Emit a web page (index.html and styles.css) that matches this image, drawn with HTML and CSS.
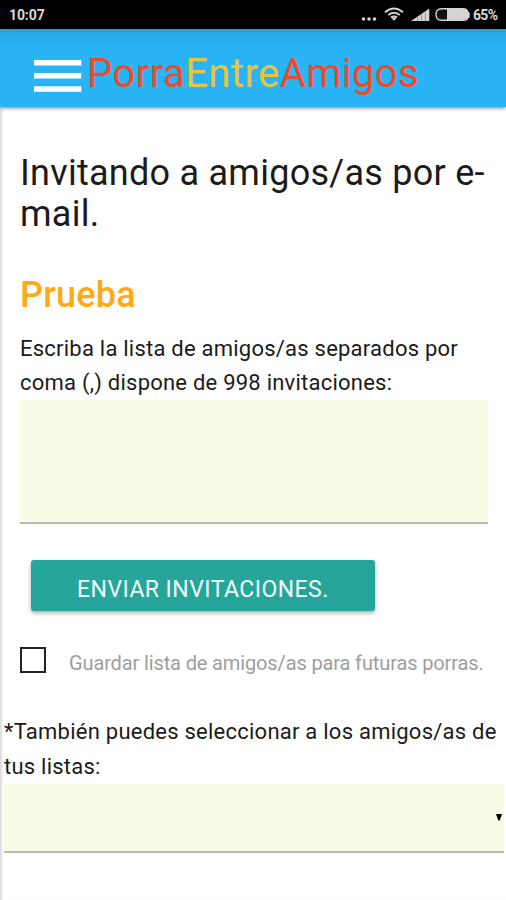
FILE: index.html
```html
<!DOCTYPE html>
<html lang="es">
<head>
<meta charset="utf-8">
<title>PorraEntreAmigos</title>
<link rel="stylesheet" href="styles.css">
</head>
<body>
<div class="status">
  <span class="clock">10:07</span>
  <svg class="status-icons" width="111" height="28" viewBox="0 0 111 28">
    <g fill="#d4d4d4">
      <circle cx="2.5" cy="19" r="1.8"/><circle cx="8" cy="19" r="1.8"/><circle cx="13.5" cy="19" r="1.8"/>
      <path d="M68.300 21H50L68.300 8.500Z"/>
    </g>
    <g fill="none" stroke="#d4d4d4" stroke-width="1.900">
      <path d="M24 12.2Q33 4.800 42 12.2M27.300 15Q33 10.3 38.700 15M30 17.6Q33 15.2 36 17.6"/>
    </g>
    <path d="M30.700 18.2Q33 16.6 35.300 18.2L33 20.8Z" fill="#d4d4d4"/>
    <path d="M56.500 16.500V21M60.500 14V21M64.300 11V21" stroke="#777" stroke-width=".6"/>
    <path d="M80.500 8.700H102Q106.300 8.700 106.800 12.200L108 13V17L106.800 17.600Q106.300 20.300 102 20.300H80.500Q75 20.300 75 14.500T80.500 8.700Z" fill="#111" stroke="#d4d4d4" stroke-width="1.400"/>
    <path d="M86 9H102Q106 9 106.500 12.200L108 13V17L106.500 17.600Q106 20 102 20H86Z" fill="#d4d4d4"/>
  </svg>
  <span class="percent">65%</span>
</div>
<header class="topbar">
  <svg class="menu" width="48" height="34" viewBox="0 0 48 34"><path d="M0 3.800H47.300M0 16.700H47.300M0 30H47.300" stroke="#fff" stroke-width="5.400"/></svg>
  <span class="brand"><span>Porra</span><span class="mid">Entre</span><span>Amigos</span></span>
</header>
<main class="page">
  <form class="invite">
    <h1>Invitando a amigos/as por e-<br>mail.</h1>
    <h2>Prueba</h2>
    <label class="prompt">Escriba la lista de amigos/as separados por<br>coma (,) dispone de 998 invitaciones:</label>
    <div class="area"></div>
    <div class="send">ENVIAR INVITACIONES.</div>
    <div class="save"><span class="box"></span><span class="save-text">Guardar lista de amigos/as para futuras porras.</span></div>
  </form>
  <p class="lists">*También puedes seleccionar a los amigos/as de<br>tus listas:</p>
  <div class="select"><svg width="6" height="7" viewBox="0 0 6 7"><path d="M0 0H6L3.700 6.500H2.300Z"/></svg></div>
</main>
</body>
</html>
```
FILE: styles.css
```css
* { box-sizing: border-box; }
body { margin: 0; width: 506px; height: 900px; overflow: hidden; background: #fff; color: #1b1b1b; font-family: Roboto, sans-serif; display: flex; flex-direction: column; }
.status { height: 29px; flex: none; background: #000; color: #d8d8d8; display: flex; font-weight: 700; font-size: 14px; line-height: 30px; padding-left: 9px; white-space: nowrap; }
.clock { width: 352px; letter-spacing: -.1px; }
.status-icons { flex: none; }
.percent { padding-left: 1px; letter-spacing: -.7px; }
.topbar { height: 78px; flex: none; background: linear-gradient(#279fd9 0, #29a9e7 7px, #29b4f6 18px); box-shadow: 0 1px 4px rgba(0,0,0,.5); display: flex; position: relative; padding: 30px 0 0 34px; }
.menu { flex: none; }
.brand { font-size: 40px; line-height: 46px; margin: -8px 0 0 5px; color: #f0492a; font-weight: 400; letter-spacing: .45px; white-space: nowrap; }
.mid { color: #e8c43c; }
.page { flex: 1; box-shadow: inset 3px 0 2px -1px #ddd; }
.invite { padding: 46px 18px 0 20px; }
h1 { margin: 0; font-size: 36px; line-height: 41px; font-weight: 400; letter-spacing: .26px; white-space: nowrap; }
h2 { margin: 39px 0 0; font-size: 36px; line-height: 42px; font-weight: 500; letter-spacing: .2px; color: #ffa916; }
.prompt { display: block; margin-top: 16px; font-size: 22px; line-height: 34px; letter-spacing: .23px; white-space: nowrap; }
.area { height: 124px; background: #f9fbe7; border-bottom: 2px solid #b9bab2; }
.send { width: 344px; height: 51px; margin: 36px 0 0 11px; border-radius: 3px; background: #26a69a; color: #f2fffd; box-shadow: 0 2px 4px rgba(0,0,0,.35); font-size: 23px; line-height: 59px; letter-spacing: .45px; padding-left: 46px; white-space: nowrap; }
.save { display: flex; height: 30px; margin-top: 35px; }
.box { width: 26px; height: 26px; border: 2px solid #222; margin-right: 23px; margin-top: 1px; flex: none; }
.save-text { color: #9e9e9e; font-size: 20px; line-height: 34px; letter-spacing: -.13px; white-space: nowrap; }
.lists { margin: 38px 0 0 4px; font-size: 22px; line-height: 35px; letter-spacing: .24px; white-space: nowrap; }
.select { margin: 0 2px 0 4px; height: 69px; background: #f9fbe7; border-bottom: 2px solid #b9bab2; display: flex; justify-content: flex-end; align-items: center; padding-right: 2px; }
```
